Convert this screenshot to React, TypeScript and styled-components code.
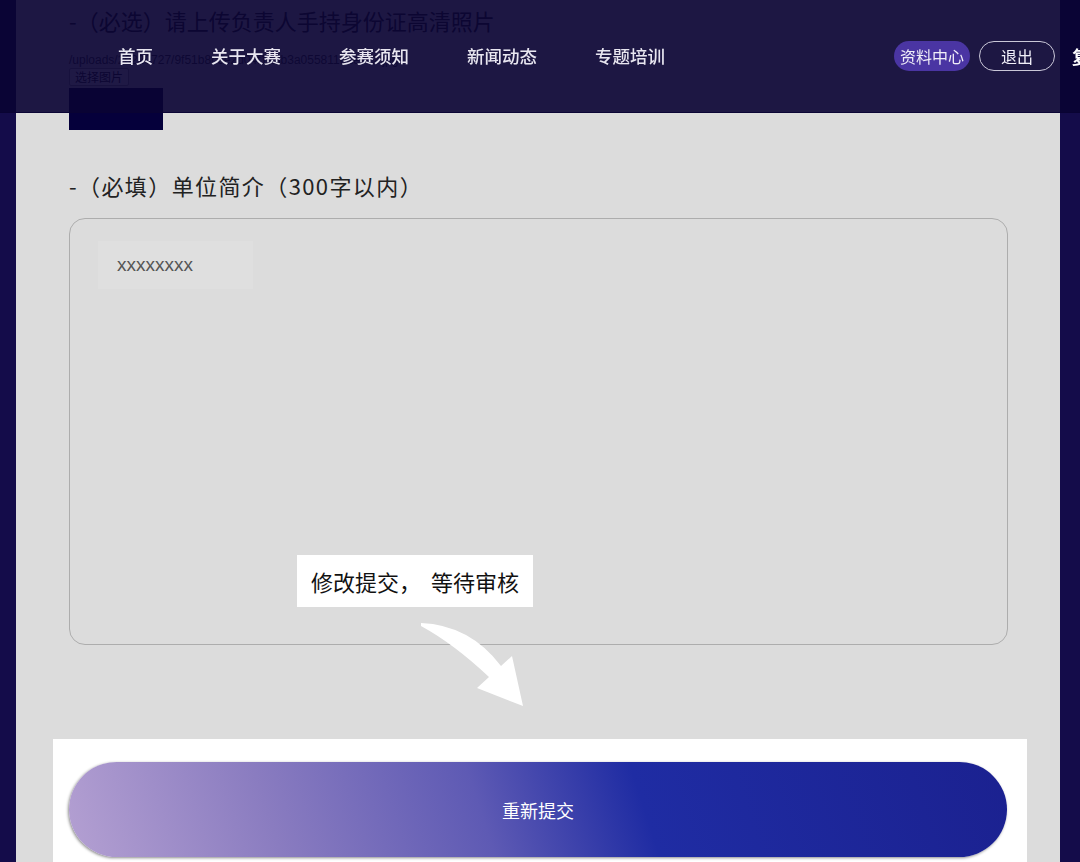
import styled, { createGlobalStyle } from "styled-components";

const GlobalStyle = createGlobalStyle`
    html, body {
        margin: 0;
        padding: 0;
        background: #140c4a;
        overflow: hidden;
        font-family: "Noto Sans CJK SC", "Noto Sans", sans-serif;
    }
`;

const Page = styled.div`
    position: relative;
    width: 1044px;
    height: 862px;
    margin-left: 16px;
    background: #dcdcdc;
    overflow: hidden;
`;

const Content = styled.div`
    display: flex;
    flex-direction: column;
    align-items: flex-start;
    padding: 5px 0 0 53px;
`;

const SectionTitle = styled.h3<{ $top?: number; $spacing?: number }>`
    margin: ${(p) => p.$top || 0}px 0 0;
    font-size: 22px;
    font-weight: 400;
    line-height: 30px;
    letter-spacing: ${(p) => p.$spacing || 0}px;
    color: #222;
    white-space: nowrap;
`;

const FilePath = styled.div`
    margin-top: 18px;
    font-family: "Liberation Sans", Arial, sans-serif;
    font-size: 12px;
    line-height: 14px;
    color: #3a3a3a;
    white-space: nowrap;
`;

const PickButton = styled.button`
    margin-top: 1px;
    height: 18px;
    padding: 0 5px;
    font-family: "Noto Sans CJK SC", sans-serif;
    font-size: 12px;
    line-height: 16px;
    color: #222;
    background: #efefef;
    border: 1px solid #999;
    border-radius: 2px;
`;

const Preview = styled.div`
    margin-top: 2px;
    width: 94px;
    height: 42px;
    background: #05003b;
`;

const TextArea = styled.div`
    box-sizing: border-box;
    margin-top: 18px;
    width: 939px;
    height: 427px;
    padding: 22px 0 0 28px;
    border: 1px solid #adadad;
    border-radius: 16px;
`;

const TextChip = styled.div`
    box-sizing: border-box;
    width: 155px;
    height: 48px;
    padding-left: 19px;
    display: flex;
    align-items: center;
    background: #dfdfdf;
    font-family: "Liberation Sans", Arial, sans-serif;
    font-size: 19px;
    color: #555;
`;

const Footer = styled.div`
    box-sizing: border-box;
    margin: 94px 0 0 -16px;
    width: 974px;
    height: 123px;
    padding: 23px 0 0 16px;
    background: #fff;
`;

const SubmitButton = styled.button`
    width: 938px;
    height: 95px;
    border: none;
    border-radius: 48px;
    background: linear-gradient(
        72deg,
        #b4a0d2 0%,
        #8a7cc0 22%,
        #5e5ab4 44%,
        #1f2ca3 61%,
        #1b2190 100%
    );
    box-shadow: -1px 1px 3px rgba(0, 0, 0, 0.45);
    font-family: "Noto Sans CJK SC", sans-serif;
    font-size: 18px;
    color: #fff;
`;

const Callout = styled.div`
    position: absolute;
    left: 281px;
    top: 555px;
    height: 52px;
    padding: 0 14px;
    display: flex;
    align-items: center;
    gap: 10px;
    background: #fff;
    font-size: 22px;
    color: #111;
    white-space: nowrap;
`;

const Arrow = styled.svg`
    position: absolute;
    left: 402px;
    top: 618px;
`;

const Header = styled.header`
    position: fixed;
    top: 0;
    left: 0;
    right: 0;
    height: 112px;
    display: flex;
    align-items: center;
    padding-left: 118px;
    border-bottom: 1px solid rgba(10, 3, 52, 0.91);
    background: rgba(10, 3, 52, 0.91);
    overflow: hidden;
`;

const Nav = styled.nav`
    display: flex;
    gap: 58px;
    margin-top: -2px;
`;

const NavItem = styled.a`
    font-size: 17.5px;
    font-weight: 500;
    color: #e8e6f0;
    text-decoration: none;
    white-space: nowrap;
`;

const Actions = styled.div`
    margin-left: auto;
    display: flex;
    align-items: center;
`;

const Pill = styled.a<{ $outline?: boolean }>`
    box-sizing: border-box;
    height: 30px;
    width: 76px;
    margin-right: 9px;
    display: flex;
    align-items: center;
    justify-content: center;
    border-radius: 15px;
    font-size: 16px;
    color: #f0eef8;
    background: ${(p) => (p.$outline ? "transparent" : "#4a35a3")};
    border: ${(p) => (p.$outline ? "1.5px solid #c9c7d8" : "none")};
`;

const UserName = styled.span`
    margin-left: 8px;
    width: 8px;
    overflow: hidden;
    white-space: nowrap;
    font-size: 18px;
    font-weight: 700;
    color: #fff;
`;

const navItems = ["首页", "关于大赛", "参赛须知", "新闻动态", "专题培训"];

export default function App() {
    return (
        <>
            <GlobalStyle />
            <Page>
                <Content>
                    <SectionTitle>-（必选）请上传负责人手持身份证高清照片</SectionTitle>
                    <FilePath>
                        /uploads/20220727/9f51b8c6e2d04f1a8b3a05581161e7c2.jpg
                    </FilePath>
                    <PickButton>选择图片</PickButton>
                    <Preview />

                    <SectionTitle $top={40} $spacing={1.4}>
                        -（必填）单位简介（300字以内）
                    </SectionTitle>
                    <TextArea>
                        <TextChip>xxxxxxxx</TextChip>
                    </TextArea>

                    <Footer>
                        <SubmitButton>重新提交</SubmitButton>
                    </Footer>
                </Content>

                <Callout>
                    <span>修改提交，</span>
                    <span>等待审核</span>
                </Callout>
                <Arrow width="110" height="92" viewBox="0 0 110 92">
                    <path
                        d="M3 5 Q52 7 83 48 L94 38 L105 88 L59 70 L71 59 Q36 26 3 8 Z"
                        fill="#fff"
                    />
                </Arrow>
            </Page>

            <Header>
                <Nav>
                    {navItems.map((item) => (
                        <NavItem key={item}>{item}</NavItem>
                    ))}
                </Nav>
                <Actions>
                    <Pill>资料中心</Pill>
                    <Pill $outline>退出</Pill>
                    <UserName>复赛</UserName>
                </Actions>
            </Header>
        </>
    );
}
